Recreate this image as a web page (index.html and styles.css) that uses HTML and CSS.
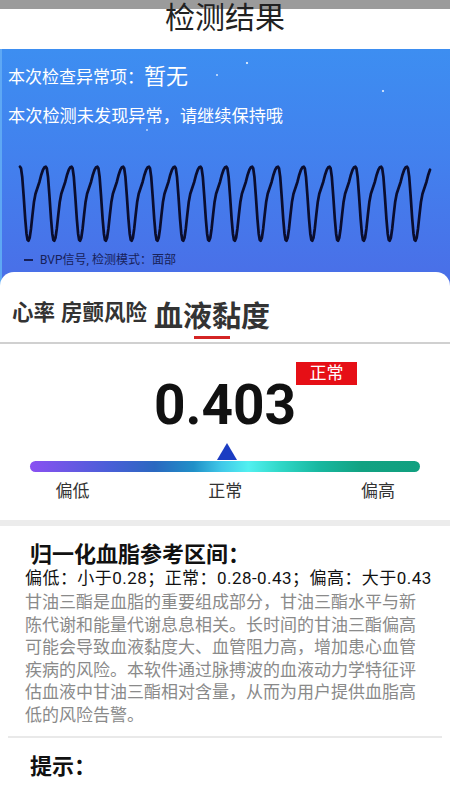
FILE: index.html
```html
<!DOCTYPE html>
<html lang="zh-CN">
<head>
<meta charset="utf-8">
<title>检测结果</title>
<link rel="stylesheet" href="styles.css">
</head>
<body>
<div class="statusbar"></div>
<h1 class="title">检测结果</h1>

<section class="hero">
  <div class="hero-line1"><span class="l1-label">本次检查异常项：</span><span class="l1-value">暂无</span></div>
  <p class="hero-line2">本次检测未发现异常，请继续保持哦</p>
  <svg class="wave" width="450" height="100" viewBox="0 0 450 100">
    <path d="M20,16.7 l1,1.5 1.2,8.5 1.5,20 1.5,22 1.3,15 1,6 1,1
      l1.2,-3 1.3,-9 1.5,-14 1.5,-13 1.5,-8 2,-6 2,-6 1.8,-7 1.7,-5 1.5,-2.5 1.3,-0.5 1,1.5 1.2,8.5 1.5,20 1.5,22 1.3,15 1,6 1,1
      l1.2,-3 1.3,-9 1.5,-14 1.5,-13 1.5,-8 2,-6 2,-6 1.8,-7 1.7,-5 1.5,-2.5 1.3,-0.5 1,1.5 1.2,8.5 1.5,20 1.5,22 1.3,15 1,6 1,1
      l1.2,-3 1.3,-9 1.5,-14 1.5,-13 1.5,-8 2,-6 2,-6 1.8,-7 1.7,-5 1.5,-2.5 1.3,-0.5 1,1.5 1.2,8.5 1.5,20 1.5,22 1.3,15 1,6 1,1
      l1.2,-3 1.3,-9 1.5,-14 1.5,-13 1.5,-8 2,-6 2,-6 1.8,-7 1.7,-5 1.5,-2.5 1.3,-0.5 1,1.5 1.2,8.5 1.5,20 1.5,22 1.3,15 1,6 1,1
      l1.2,-3 1.3,-9 1.5,-14 1.5,-13 1.5,-8 2,-6 2,-6 1.8,-7 1.7,-5 1.5,-2.5 1.3,-0.5 1,1.5 1.2,8.5 1.5,20 1.5,22 1.3,15 1,6 1,1
      l1.2,-3 1.3,-9 1.5,-14 1.5,-13 1.5,-8 2,-6 2,-6 1.8,-7 1.7,-5 1.5,-2.5 1.3,-0.5 1,1.5 1.2,8.5 1.5,20 1.5,22 1.3,15 1,6 1,1
      l1.2,-3 1.3,-9 1.5,-14 1.5,-13 1.5,-8 2,-6 2,-6 1.8,-7 1.7,-5 1.5,-2.5 1.3,-0.5 1,1.5 1.2,8.5 1.5,20 1.5,22 1.3,15 1,6 1,1
      l1.2,-3 1.3,-9 1.5,-14 1.5,-13 1.5,-8 2,-6 2,-6 1.8,-7 1.7,-5 1.5,-2.5 1.3,-0.5 1,1.5 1.2,8.5 1.5,20 1.5,22 1.3,15 1,6 1,1
      l1.2,-3 1.3,-9 1.5,-14 1.5,-13 1.5,-8 2,-6 2,-6 1.8,-7 1.7,-5 1.5,-2.5 1.3,-0.5 1,1.5 1.2,8.5 1.5,20 1.5,22 1.3,15 1,6 1,1
      l1.2,-3 1.3,-9 1.5,-14 1.5,-13 1.5,-8 2,-6 2,-6 1.8,-7 1.7,-5 1.5,-2.5 1.3,-0.5 1,1.5 1.2,8.5 1.5,20 1.5,22 1.3,15 1,6 1,1
      l1.2,-3 1.3,-9 1.5,-14 1.5,-13 1.5,-8 2,-6 2,-6 1.8,-7 1.7,-5 1.5,-2.5 1.3,-0.5 1,1.5 1.2,8.5 1.5,20 1.5,22 1.3,15 1,6 1,1
      l1.2,-3 1.3,-9 1.5,-14 1.5,-13 1.5,-8 2,-6 2,-6 1.8,-7 1.7,-5 1.5,-2.5 1.3,-0.5 1,1.5 1.2,8.5 1.5,20 1.5,22 1.3,15 1,6 1,1
      l1.2,-3 1.3,-9 1.5,-14 1.5,-13 1.5,-8 2,-6 2,-6 1.8,-7 1.7,-5 1.5,-2.5 1.3,-0.5 1,1.5 1.2,8.5 1.5,20 1.5,22 1.3,15 1,6 1,1
      l1.2,-3 1.3,-9 1.5,-14 1.5,-13 1.5,-8 2,-6 2,-6 1.8,-7 1.7,-5 1.5,-2.5 1.3,-0.5 1,1.5 1.2,8.5 1.5,20 1.5,22 1.3,15 1,6 1,1
      l1.2,-3 1.3,-9 1.5,-14 1.5,-13 1.5,-8 2,-6 2,-6 1.8,-7 1.7,-5 1.5,-2.5 1.3,-0.5 1,1.5 1.2,8.5 1.5,20 1.5,22 1.3,15 1,6 1,1
      l1.2,-3 1.3,-9 1.5,-14 1.5,-13 1.5,-8 2,-6 2,-6 1.8,-7 1.7,-5"
      fill="none" stroke="#0a0d2e" stroke-width="2.7" stroke-linejoin="round" stroke-linecap="round"/>
  </svg>
  <div class="legend"><span class="legend-line"></span><span class="legend-text">BVP信号, 检测模式：面部</span></div>
</section>

<section class="panel">
  <nav class="tabs">
    <span class="tab">心率</span>
    <span class="tab">房颤风险</span>
    <span class="tab tab-active"><span class="tab-text">血液黏度</span><span class="tab-underline"></span></span>
  </nav>

  <div class="result">
    <div class="value-row"><span class="value-wrap"><span class="value">0.403</span><span class="badge">正常</span></span></div>
    <div class="marker-row">
      <svg class="marker" style="margin-left: 50.4%" width="20" height="17" viewBox="0 0 20 17"><polygon points="10,0 20,17 0,17" fill="#1b3cc2"/></svg>
    </div>
    <div class="bar"></div>
    <div class="scale-labels"><span>偏低</span><span>正常</span><span>偏高</span></div>
  </div>

  <div class="band"></div>

  <div class="info">
    <h2 class="info-title">归一化血脂参考区间：</h2>
    <p class="ranges">偏低：小于0.28；正常：0.28-0.43；偏高：大于0.43</p>
    <p class="desc">甘油三酯是血脂的重要组成部分，甘油三酯水平与新陈代谢和能量代谢息息相关。长时间的甘油三酯偏高可能会导致血液黏度大、血管阻力高，增加患心血管疾病的风险。本软件通过脉搏波的血液动力学特征评估血液中甘油三酯相对含量，从而为用户提供血脂高低的风险告警。</p>
  </div>

  <div class="sep"></div>
  <h2 class="tip">提示：</h2>
</section>
</body>
</html>
```

FILE: styles.css
```css
* { box-sizing: border-box; }

html, body {
  margin: 0;
  padding: 0;
  background: #ffffff;
}

body {
  width: 450px;
  height: 800px;
  overflow: hidden;
  font-family: Roboto, "Noto Sans CJK SC", sans-serif;
  color: #222;
}

.statusbar {
  height: 9px;
  background: #9b9b9b;
}

.title {
  margin: -9px 0 14px;
  height: 35px;
  font-size: 30px;
  line-height: 35px;
  font-weight: 400;
  text-align: center;
  color: #222;
}

.hero {
  padding: 13px 0 18px 0;
  border-left: 2px solid #5ea8f4;
  background:
    radial-gradient(circle at 245px 14px, rgba(255,255,255,0.75) 0, rgba(255,255,255,0.75) 0.8px, rgba(255,255,255,0) 1.6px),
    radial-gradient(circle at 215px 26px, rgba(255,255,255,0.6) 0, rgba(255,255,255,0.6) 0.7px, rgba(255,255,255,0) 1.4px),
    radial-gradient(circle at 381px 42px, rgba(255,255,255,0.7) 0, rgba(255,255,255,0.7) 0.8px, rgba(255,255,255,0) 1.6px),
    radial-gradient(circle at 145px 81px, rgba(255,255,255,0.5) 0, rgba(255,255,255,0.5) 0.7px, rgba(255,255,255,0) 1.4px),
    linear-gradient(180deg, #3d8ef1 0%, #4281ee 45%, #4a6ee7 100%);
  color: #ffffff;
}

.hero-line1 {
  display: flex;
  align-items: center;
  height: 30px;
  padding-left: 6px;
}

.l1-label {
  font-size: 17px;
  line-height: 30px;
}

.l1-value {
  font-size: 22px;
  line-height: 30px;
}

.hero-line2 {
  margin: 12px 0 0;
  padding-left: 6px;
  font-size: 17.2px;
  line-height: 24px;
}

.wave {
  display: block;
  margin: 22px 0 0 -2px;
}

.legend {
  display: flex;
  align-items: center;
  margin-top: 2px;
  height: 16px;
  padding-left: 22px;
  color: #17215a;
}

.legend-line {
  width: 9px;
  height: 2px;
  background: #17215a;
  margin-right: 7px;
}

.legend-text {
  font-size: 12px;
  line-height: 16px;
}

.panel {
  margin-top: -14px;
  background: #ffffff;
  border-radius: 14px 14px 0 0;
  position: relative;
}

.tabs {
  display: flex;
  align-items: flex-start;
  gap: 6px;
  padding: 27px 0 3px 12px;
  border-bottom: 2px solid #d0d0d0;
}

.tab {
  font-size: 21.5px;
  line-height: 28px;
  font-weight: 700;
  color: #333;
}

.tab-active {
  display: flex;
  flex-direction: column;
  align-items: center;
  margin-left: 1px;
}

.tab-text {
  font-size: 29px;
  line-height: 37px;
  font-weight: 700;
  color: #333;
}

.tab-underline {
  width: 36px;
  height: 3px;
  background: #d42424;
}

.result {
  padding: 34px 0 17px;
}

.value-row {
  text-align: center;
  height: 55px;
  font-size: 55px;
  line-height: 55px;
}

.value-wrap {
  display: inline-block;
  position: relative;
}

.value {
  font-weight: 700;
  color: #111;
}

.badge {
  position: absolute;
  left: 100%;
  top: -16px;
  width: 61px;
  height: 23px;
  background: #e60f16;
  color: #fff;
  font-size: 17px;
  line-height: 23px;
  text-align: center;
  white-space: nowrap;
}

.marker-row {
  margin-top: 10px;
  padding: 0 30px;
  height: 17px;
}

.marker {
  display: block;
  transform: translateX(-50%);
}

.bar {
  margin: 1px 30px 0;
  height: 11px;
  border-radius: 6px;
  background: linear-gradient(90deg,
    #8a50f2 0%, #6a58e4 10%, #4a5ed8 20%, #2a68c0 32%, #2090c8 42%,
    #40c8e8 49%, #52f0f0 56%, #30d8c8 64%, #18b8a0 74%, #12a282 85%, #10a080 100%);
}

.scale-labels {
  display: flex;
  justify-content: space-between;
  margin-top: 7px;
  padding: 0 55px 0 55.5px;
  font-size: 17px;
  line-height: 24px;
  color: #333;
}

.band {
  height: 6px;
  background: #ececec;
}

.info {
  padding: 16px 25px 0 25px;
}

.info-title {
  margin: 0 0 0 5px;
  font-size: 22px;
  line-height: 26px;
  font-weight: 700;
  color: #111;
}

.ranges {
  margin: 0;
  font-size: 17px;
  line-height: 20px;
  letter-spacing: 0.45px;
  color: #111;
  white-space: nowrap;
}

.desc {
  margin: 3px 0 0;
  width: 400px;
  font-size: 17px;
  line-height: 22.5px;
  color: #8a8a8a;
}

.sep {
  margin: 10px 8px 0;
  height: 2px;
  background: #e9e9e9;
}

.tip {
  margin: 16px 0 0 30px;
  font-size: 22px;
  line-height: 26px;
  font-weight: 700;
  color: #111;
}
```
